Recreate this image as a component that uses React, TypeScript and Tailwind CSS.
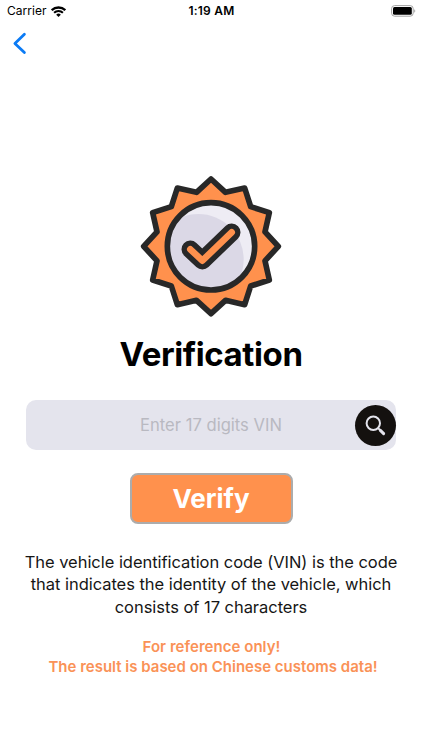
const StatusBar = () => (
  <div className="h-[22px] pl-[7px] pr-[6px] grid grid-cols-3 items-center text-black">
    <div className="flex items-center gap-[5px]">
      <span className="text-[12px] tracking-[0.02px]">Carrier</span>
      <svg className="w-[15px] h-[11px]" viewBox="0 0 15 11" fill="none" stroke="#000" aria-hidden="true">
        <path d="M0.700 4.300a9.600 9.600 0 0 1 13.600 0" strokeWidth={2.3} />
        <path d="M3.100 6.800a6.200 6.200 0 0 1 8.800 0" strokeWidth={2} />
        <path d="M7.500 11L5.200 8.700a3.300 3.300 0 0 1 4.600 0z" fill="#000" stroke="none" />
      </svg>
    </div>
    <span className="text-center text-[12px] tracking-[0.2px] font-semibold whitespace-nowrap">1:19 AM</span>
    <svg className="justify-self-end w-[25px] h-[12px]" viewBox="0 0 25 12" aria-hidden="true">
      <rect x="0.6" y="0.6" width="21.600" height="10.600" rx="3" fill="#fff" stroke="#a3a3a3" />
      <rect x="2" y="2" width="18.800" height="7.800" rx="1.500" fill="#000" />
      <path d="M23.300 4.200c1.300.6 1.300 3 0 3.600z" fill="#999" />
    </svg>
  </div>
)

const Badge = () => (
  <svg className="w-[150px] h-[152px]" viewBox="0 0 450 456" strokeLinejoin="round" strokeLinecap="round" aria-hidden="true">
    <clipPath id="disc">
      <circle cx="225" cy="229" r="131" />
    </clipPath>
    <path
      d="M225 27L268.500 67L326 54L344 110L400 128L387 185.500L427 229L387 272.500L400 330L344 348L326 404L268.500 391L225 431L181.500 391L124 404L106 348L50 330L63 272.500L23 229L63 185.500L50 128L106 110L124 54L181.500 67Z"
      fill="#ff914d"
      stroke="#282828"
      strokeWidth={17}
    />
    <circle cx="225" cy="229" r="131" fill="#eeecf4" />
    <circle cx="187" cy="268" r="136" fill="#dbd8e6" clipPath="url(#disc)" />
    <circle cx="225" cy="229" r="131" fill="none" stroke="#282828" strokeWidth={17} />
    <path d="M163 238L199 272L287 187" fill="none" stroke="#282828" strokeWidth={53} />
    <path d="M163 238L199 272L287 187" fill="none" stroke="#ff914d" strokeWidth={20} />
  </svg>
)

const App = () => {
  return (
    <div className="w-full h-[750px] bg-white flex flex-col overflow-hidden font-['Inter','Liberation_Sans',sans-serif]">
      <StatusBar />
      <button className="ml-[12px] mt-[10px] w-[15px] h-[23px]" aria-label="Back">
        <svg viewBox="0 0 15 23" fill="none" stroke="#0b7bf5" strokeWidth={2.8} strokeLinecap="round" strokeLinejoin="round">
          <path d="M12.400 2.200L2.900 11.400L12.400 20.600" />
        </svg>
      </button>
      <div className="mt-[115px] flex flex-col items-center">
        <Badge />
        <h1 className="mt-[10px] text-[33px] leading-[44px] tracking-[-0.400px] font-bold text-black whitespace-nowrap">
          Verification
        </h1>
        <div className="mt-[24px] w-[370px] h-[50px] rounded-[10px] bg-[#e4e4ed] flex items-center">
          <input
            className="w-[370px] h-full pb-px text-center text-[16.600px] text-black placeholder-[#b9b9c1] outline-none"
            type="text"
            maxLength={17}
            placeholder="Enter 17 digits VIN"
          />
          <button className="-ml-[41px] w-[41px] h-[41px] shrink-0 rounded-full bg-[#14110f] flex items-center justify-center" aria-label="Search">
            <svg className="w-[41px] h-[41px]" viewBox="0 0 41 41" fill="none" stroke="#e4e4ed" strokeLinecap="round">
              <circle cx="18.300" cy="18.300" r="6.700" strokeWidth={2} />
              <path d="M23.400 23.400L25 25" strokeWidth={2} />
              <path d="M25.400 25.400L28.600 28.600" strokeWidth={3} />
            </svg>
          </button>
        </div>
        <button className="mt-[23px] w-[163px] h-[51px] rounded-[8px] border-2 border-[#acacac] bg-[#ff914d] text-white text-[26px] font-bold">
          Verify
        </button>
        <p className="mt-[27px] text-center text-[16.500px] leading-[22.300px] tracking-[-0.040px] text-[#161616] whitespace-nowrap">
          The vehicle identification code (VIN) is the code
          <br />
          that indicates the identity of the vehicle, which
          <br />
          consists of 17 characters
        </p>
        <p className="mt-[19px] ml-[4px] text-center text-[15px] leading-[20.500px] font-semibold text-[#fa9257] whitespace-nowrap">
          <span className="mr-[3px] tracking-[0.04px]">For reference only!</span>
          <br />
          The result is based on Chinese customs data!
        </p>
      </div>
    </div>
  )
}

export default App
